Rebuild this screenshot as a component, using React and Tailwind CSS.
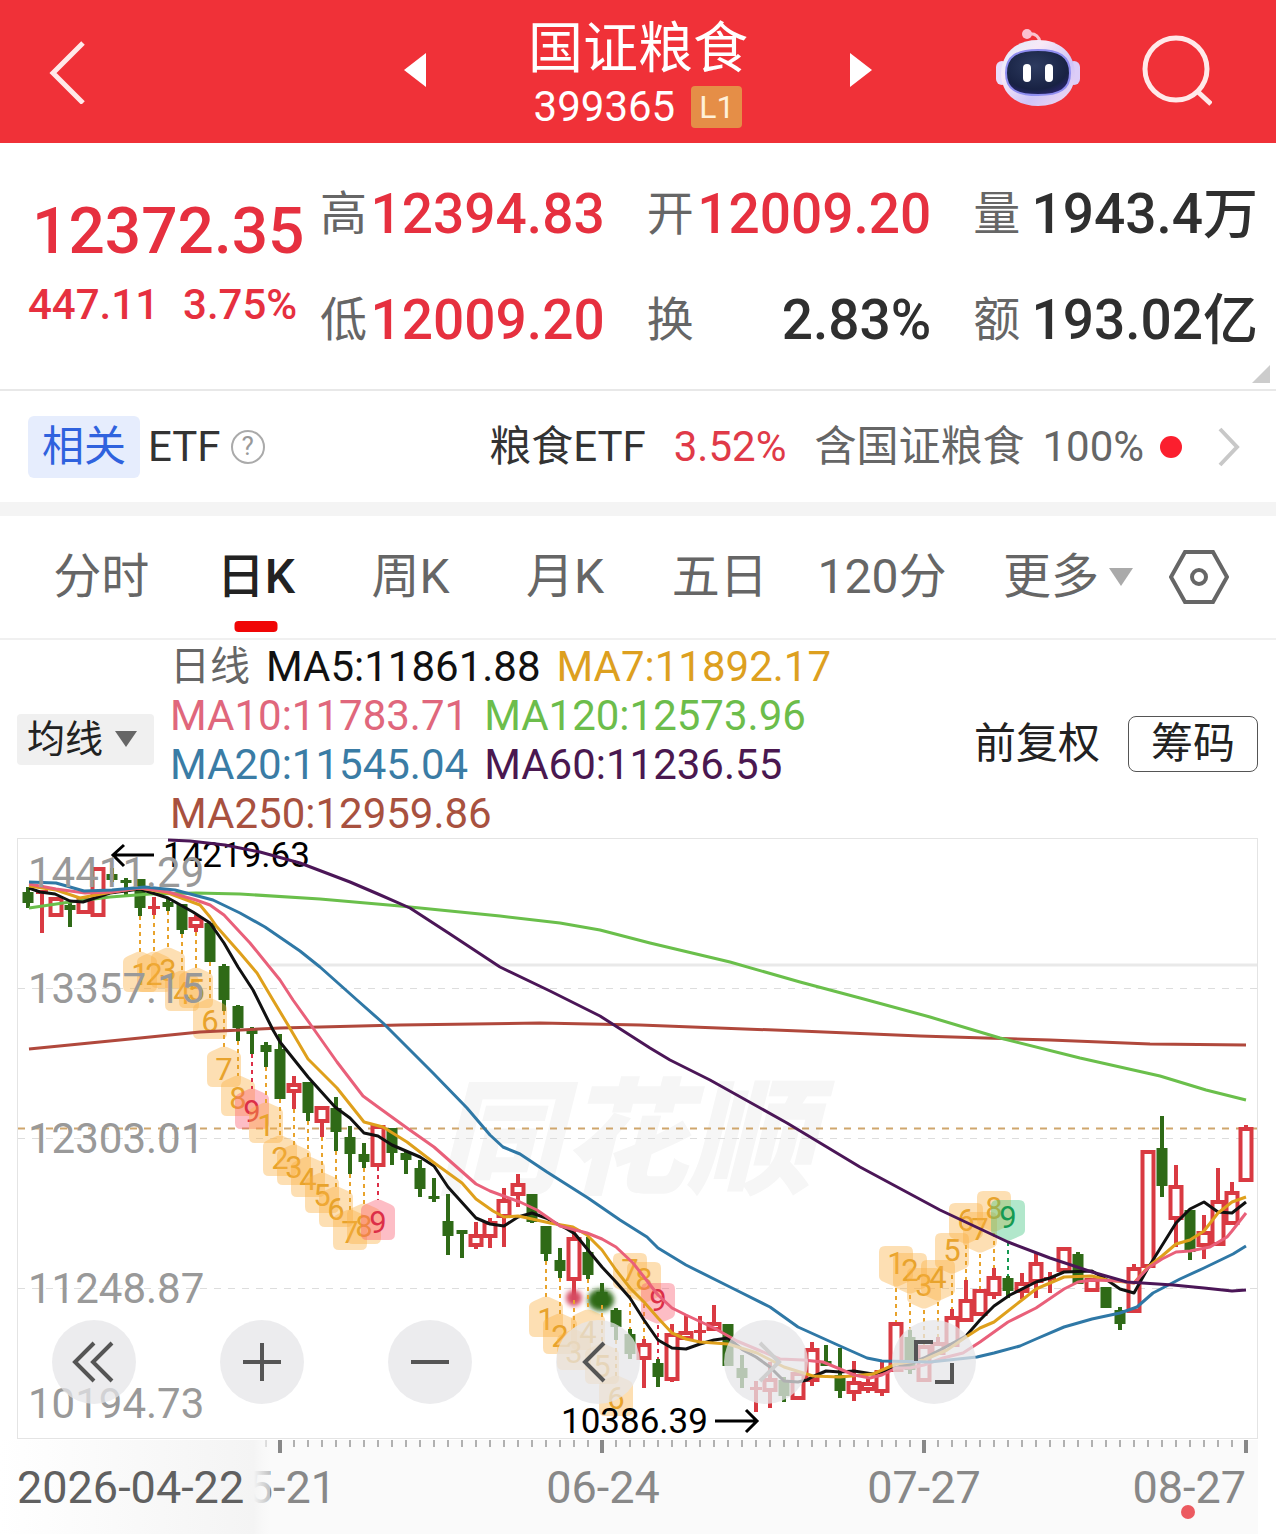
import React from 'react';

const RED = '#d93a42';
const GREEN = '#2f6a17';

const quotes = [
    { label: '高', value: '12394.83', color: 'text-[#e6303f]' },
    { label: '开', value: '12009.20', color: 'text-[#e6303f]' },
    { label: '量', value: '1943.4万', color: 'text-[#2f2f2f]' },
    { label: '低', value: '12009.20', color: 'text-[#e6303f]' },
    { label: '换', value: '2.83%', color: 'text-[#2f2f2f]' },
    { label: '额', value: '193.02亿', color: 'text-[#2f2f2f]' },
];

const tabs = ['分时', '日K', '周K', '月K', '五日', '120分'];

const averages = [
    { text: 'MA5:11861.88', color: 'text-[#111111]' },
    { text: 'MA7:11892.17', color: 'text-[#dda01f]' },
    { text: 'MA10:11783.71', color: 'text-[#e0677c]' },
    { text: 'MA120:12573.96', color: 'text-[#6cbd4b]' },
    { text: 'MA20:11545.04', color: 'text-[#3a7ca5]' },
    { text: 'MA60:11236.55', color: 'text-[#4a1850]' },
    { text: 'MA250:12959.86', color: 'text-[#a8513f]' },
];

// [direction, high, low, body top, body bottom], one per trading day
const candles = [
    ['g', 887, 908, 892, 903], ['r', 890, 933, 890, 894], ['r', 897, 917, 897, 917], ['g', 900, 927, 905, 910],
    ['r', 898, 914, 898, 914], ['r', 867, 917, 867, 917], ['g', 868, 882, 874, 880], ['g', 878, 896, 880, 883],
    ['g', 879, 916, 879, 908], ['r', 897, 915, 906, 909], ['g', 898, 911, 902, 907], ['g', 904, 934, 904, 930],
    ['r', 915, 932, 917, 928], ['g', 923, 962, 923, 962], ['g', 964, 1011, 966, 1000], ['g', 1005, 1041, 1006, 1028],
    ['g', 1027, 1054, 1030, 1034], ['g', 1042, 1067, 1045, 1052], ['g', 1034, 1099, 1049, 1099], ['r', 1076, 1109, 1083, 1093],
    ['g', 1082, 1121, 1082, 1113], ['r', 1106, 1137, 1106, 1123], ['g', 1097, 1151, 1108, 1132], ['g', 1126, 1174, 1137, 1154],
    ['g', 1143, 1168, 1154, 1162], ['r', 1125, 1167, 1125, 1167], ['g', 1128, 1165, 1128, 1153], ['g', 1152, 1174, 1153, 1160],
    ['g', 1160, 1197, 1168, 1189], ['g', 1178, 1202, 1196, 1199], ['g', 1194, 1255, 1221, 1236], ['g', 1230, 1258, 1230, 1234],
    ['r', 1222, 1249, 1234, 1247], ['r', 1218, 1248, 1221, 1238], ['r', 1188, 1247, 1199, 1218], ['r', 1174, 1207, 1183, 1196],
    ['g', 1194, 1223, 1194, 1222], ['g', 1226, 1261, 1226, 1254], ['g', 1248, 1278, 1260, 1271], ['r', 1227, 1300, 1237, 1281],
    ['g', 1237, 1279, 1252, 1275], ['g', 1283, 1305, 1292, 1305], ['g', 1308, 1340, 1310, 1327], ['g', 1329, 1359, 1334, 1354],
    ['r', 1339, 1388, 1343, 1360], ['g', 1359, 1387, 1363, 1377], ['r', 1324, 1382, 1333, 1381], ['r', 1315, 1340, 1331, 1340],
    ['r', 1316, 1344, 1330, 1333], ['r', 1305, 1331, 1322, 1331], ['g', 1324, 1366, 1324, 1366], ['g', 1355, 1388, 1368, 1378],
    ['r', 1381, 1412, 1387, 1390], ['r', 1362, 1408, 1378, 1392], ['g', 1377, 1402, 1380, 1396], ['r', 1372, 1400, 1372, 1400],
    ['r', 1342, 1386, 1348, 1382], ['g', 1345, 1366, 1361, 1366], ['g', 1348, 1398, 1375, 1391], ['r', 1361, 1401, 1381, 1394],
    ['r', 1378, 1393, 1382, 1391], ['r', 1362, 1396, 1370, 1393], ['r', 1322, 1372, 1322, 1372], ['g', 1330, 1374, 1337, 1370],
    ['r', 1345, 1382, 1345, 1382], ['r', 1337, 1355, 1342, 1355], ['r', 1309, 1347, 1316, 1347], ['r', 1280, 1322, 1299, 1322],
    ['r', 1289, 1316, 1289, 1316], ['r', 1268, 1299, 1276, 1296], ['g', 1276, 1298, 1278, 1291], ['r', 1273, 1299, 1282, 1293],
    ['r', 1253, 1298, 1262, 1283], ['r', 1272, 1293, 1277, 1280], ['r', 1247, 1272, 1247, 1272], ['g', 1252, 1284, 1254, 1284],
    ['r', 1278, 1292, 1278, 1292], ['g', 1287, 1308, 1287, 1308], ['g', 1307, 1330, 1310, 1324], ['r', 1264, 1313, 1267, 1313],
    ['r', 1150, 1268, 1150, 1268], ['g', 1116, 1197, 1148, 1186], ['r', 1165, 1247, 1185, 1220], ['g', 1210, 1260, 1210, 1252],
    ['r', 1215, 1259, 1231, 1247], ['r', 1168, 1246, 1200, 1246], ['r', 1182, 1225, 1191, 1225], ['r', 1125, 1182, 1127, 1182],
];

// [count, day index, top of the marker]; the tip points at the candle
const buySetups = [
    [1, 8, 952], [2, 9, 952], [3, 10, 948], [4, 11, 971], [5, 12, 968], [6, 13, 999], [7, 14, 1047], [8, 15, 1076], [9, 16, 1089],
    [1, 17, 1103], [2, 18, 1136], [3, 19, 1145], [4, 20, 1157], [5, 21, 1173], [6, 22, 1187], [7, 23, 1210], [8, 24, 1204], [9, 25, 1200],
    [1, 37, 1297], [2, 38, 1314], [3, 39, 1330], [4, 40, 1310], [5, 41, 1344], [6, 42, 1376],
];
const sellSetups = [
    [7, 43, 1253], [8, 44, 1262], [9, 45, 1283, 'red'],
    [1, 62, 1246], [2, 63, 1253], [3, 64, 1268], [4, 65, 1260], [5, 66, 1233], [6, 67, 1203], [7, 68, 1212], [8, 69, 1191], [9, 70, 1200, 'green'],
];

const markerColors = {
    orange: { fill: '#fbb040', text: '#e8a32c' },
    red: { fill: '#fb5a6e', text: '#dc2f48' },
    green: { fill: '#3cc47c', text: '#169a52' },
};

const lines = [
    { color: '#b0483c', points: '29,1049 120,1040 200,1032 280,1028 400,1025 540,1023 640,1025 800,1031 920,1036 1050,1040 1150,1044 1246,1045' },
    { color: '#6abf4b', points: '29,908 70,902 110,897 150,894 196,893 240,894 320,899 400,906 500,916 560,923 600,930 650,943 730,962 800,982 860,998 930,1017 1000,1038 1080,1058 1160,1076 1206,1090 1246,1100' },
    { color: '#111111', points: '29,888 40,892 55,894 70,901 83,902 110,893 140,889 168,898 193,912 210,923 224,943 238,967 253,990 273,1030 280,1042 308,1077 335,1107 350,1118 364,1133 378,1136 392,1145 420,1157 434,1166 448,1187 476,1218 490,1224 504,1226 518,1217 532,1213 546,1218 567,1229 575,1234 588,1250 602,1267 616,1282 630,1298 644,1320 658,1340 672,1348 686,1349 700,1344 714,1340 728,1338 743,1350 756,1357 770,1367 784,1381 798,1382 807,1380 812,1377 826,1371 840,1372 854,1371 873,1374 890,1369 910,1364 924,1358 940,1350 966,1336 980,1320 994,1306 1010,1295 1036,1282 1050,1278 1064,1272 1092,1271 1107,1280 1120,1289 1134,1293 1148,1268 1153,1260 1176,1223 1190,1209 1204,1202 1218,1212 1232,1213 1246,1202' },
    { color: '#dfa01c', points: '29,886 56,890 80,898 112,892 140,888 168,893 200,905 210,917 217,927 240,953 257,973 273,1000 288,1025 308,1059 337,1088 364,1122 383,1127 407,1142 433,1162 462,1183 476,1199 493,1211 504,1217 518,1216 532,1219 550,1223 573,1227 587,1235 602,1250 616,1270 630,1288 644,1302 658,1318 672,1333 686,1339 700,1342 728,1344 757,1353 784,1367 813,1376 840,1377 873,1374 896,1364 924,1360 947,1350 966,1337 980,1328 994,1322 1022,1300 1036,1289 1064,1277 1092,1276 1107,1280 1134,1283 1148,1267 1162,1256 1176,1244 1190,1240 1204,1231 1218,1213 1232,1202 1246,1197' },
    { color: '#e9607a', points: '29,884 56,889 85,893 112,892 140,888 168,892 196,900 210,905 224,915 250,943 280,980 293,1000 313,1028 337,1062 363,1096 378,1107 407,1128 434,1147 476,1184 490,1191 520,1202 537,1210 560,1226 587,1233 602,1239 616,1247 633,1263 644,1277 658,1295 672,1308 686,1315 714,1328 737,1341 756,1349 780,1359 803,1360 823,1362 840,1369 854,1375 870,1378 882,1375 896,1368 910,1368 924,1365 943,1358 963,1353 980,1342 1008,1322 1036,1308 1064,1289 1078,1282 1093,1280 1120,1281 1134,1283 1148,1268 1162,1259 1176,1252 1190,1251 1210,1247 1227,1237 1232,1231 1246,1213' },
    { color: '#2f78a6', points: '29,882 56,883 84,891 112,890 145,887 175,890 213,900 240,913 265,927 300,951 320,967 357,1000 383,1023 433,1073 467,1108 490,1135 503,1147 520,1154 547,1172 588,1198 620,1220 647,1237 658,1248 686,1265 728,1286 740,1292 770,1307 798,1327 840,1346 867,1358 882,1361 930,1362 977,1357 994,1353 1020,1346 1036,1339 1064,1327 1092,1319 1120,1313 1137,1307 1153,1293 1180,1279 1204,1268 1233,1254 1246,1246' },
    { color: '#4b1657', points: '168,840 190,841 225,845 260,852 300,863 350,882 378,894 410,908 450,934 500,967 550,991 600,1016 650,1048 670,1060 710,1080 787,1123 860,1167 940,1210 1008,1242 1050,1258 1092,1272 1127,1282 1173,1285 1204,1288 1232,1291 1246,1290' },
];

const priceLabels = [
    ['14411.29', 887], ['13357.15', 1003], ['12303.01', 1153], ['11248.87', 1303], ['10194.73', 1418],
];

const dayX = (i) => 28 + i * 14;

function Candle({ day, data }) {
    const [dir, high, low, top, bottom] = data;
    const x = dayX(day);
    if (dir === 'g') {
        return (
            <g fill={GREEN}>
                <rect x={x - 2} y={high} width="4" height={low - high} />
                <rect x={x - 5.5} y={top} width="11" height={bottom - top} />
            </g>
        );
    }
    const height = bottom - top;
    return (
        <g fill={RED}>
            {top > high && <rect x={x - 2} y={high} width="4" height={top - high} />}
            {low > bottom && <rect x={x - 2} y={bottom} width="4" height={low - bottom} />}
            {height > 8
                ? <rect x={x - 5.5} y={top + 2} width="11" height={height - 4} fill="#ffffff" stroke={RED} strokeWidth="4" />
                : <rect x={x - 6} y={top} width="12" height={height} />}
        </g>
    );
}

function Marker({ count, day, y, down, tone }) {
    const x = dayX(day);
    const { fill, text } = markerColors[tone];
    const [, high, low] = candles[day];
    const shape = down
        ? `M${x - 11} ${y}h22q6 0 6 6v24q0 4 -5 6l-9 4q-3 1 -6 0l-9 -4q-5 -2 -5 -6v-24q0 -6 6 -6z`
        : `M${x - 11} ${y + 40}h22q6 0 6 -6v-24q0 -4 -5 -6l-9 -4q-3 -1 -6 0l-9 4q-5 2 -5 6v24q0 6 6 6z`;
    return (
        <g>
            <line x1={x} x2={x} y1={down ? y + 42 : low} y2={down ? high : y} stroke={text} strokeWidth="2" strokeDasharray="4 4" />
            <path d={shape} fill={fill} fillOpacity="0.4" />
            <text x={x} y={down ? y + 28 : y + 33} textAnchor="middle" fontSize="31" fill={text}>{count}</text>
        </g>
    );
}

function KLineChart() {
    return (
        <svg viewBox="0 838 1276 696" className="block w-full overflow-visible" role="img" aria-label="日K线图">
            <defs>
                <linearGradient id="dateFade" x1="0" x2="1" y1="0" y2="0">
                    <stop offset="0" stopColor="#ffffff" />
                    <stop offset="0.94" stopColor="#f4f4f4" />
                    <stop offset="1" stopColor="#fafafa" stopOpacity="0.5" />
                </linearGradient>
                <filter id="soft" x="-50%" y="-50%" width="200%" height="200%">
                    <feGaussianBlur stdDeviation="2.5" />
                </filter>
            </defs>

            <rect x="18" y="1440" width="1240" height="94" fill="#fafafa" />
            <rect x="17.5" y="838.5" width="1240" height="600" fill="#ffffff" stroke="#e4e4e4" />
            <text x="624" y="1184" textAnchor="middle" fontSize="126" fontWeight="900" fontStyle="italic" fill="#f6f6f6">同花顺</text>
            <line x1="270" x2="1257" y1="965" y2="965" stroke="#e9e9e9" strokeWidth="3" />
            {[988, 1138, 1288].map((y) => (
                <line key={y} x1="18" x2="1257" y1={y + 0.5} y2={y + 0.5} stroke="#dddddd" strokeDasharray="7 7" />
            ))}
            <line x1="18" x2="1257" y1="1128.5" y2="1128.5" stroke="#cfa66c" strokeWidth="2" strokeDasharray="7 7" />

            {candles.map((c, i) => <Candle key={i} day={i} data={c} />)}
            <ellipse cx="574" cy="1298" rx="8" ry="8" fill="#d64a60" filter="url(#soft)" />
            <ellipse cx="601" cy="1300" rx="13" ry="11" fill={GREEN} filter="url(#soft)" />

            {buySetups.map(([count, day, y]) => (
                <Marker key={day} count={count} day={day} y={y} tone={count === 9 ? 'red' : 'orange'} />
            ))}
            {sellSetups.map(([count, day, y, tone = 'orange']) => (
                <Marker key={day} count={count} day={day} y={y} tone={tone} down />
            ))}

            <text x="163" y="867" fontSize="35" fill="#000000">14219.63</text>
            <path d="M154 855H113M124 845L113 855L124 866" fill="none" stroke="#000000" strokeWidth="3" />
            <text x="561" y="1433" fontSize="35" fill="#000000">10386.39</text>
            <path d="M715 1421H757M746 1410L757 1421L746 1432" fill="none" stroke="#000000" strokeWidth="3" />

            {lines.map(({ color, points }) => (
                <polyline key={color} points={points} fill="none" stroke={color} strokeWidth="3" strokeLinejoin="round" />
            ))}

            {priceLabels.map(([text, y]) => (
                <text key={text} x="28" y={y} fontSize="42" fill="#999999">{text}</text>
            ))}

            {candles.map((_, i) => {
                if (i < 17) return null;
                const major = (i - 18) % 23 === 0;
                return (
                    <rect
                        key={i}
                        x={dayX(i) - (major ? 2 : 1)}
                        y="1440"
                        width={major ? 4 : 2}
                        height={major ? 13 : 7}
                        fill={major ? '#888888' : '#b0b0b0'}
                    />
                );
            })}
            <g fontSize="45" fill="#888888">
                <text x="336" y="1503" textAnchor="end">05-21</text>
                <text x="603" y="1503" textAnchor="middle">06-24</text>
                <text x="924" y="1503" textAnchor="middle">07-27</text>
                <text x="1246" y="1503" textAnchor="end">08-27</text>
            </g>
            <rect x="0" y="1440" width="270" height="94" fill="url(#dateFade)" />
            <text x="17" y="1503" fontSize="45" fill="#606060">2026-04-22</text>
            <circle cx="1188" cy="1512" r="7" fill="#ec5a60" />
        </svg>
    );
}

function RoundButton({ label, faint, children }) {
    return (
        <button type="button" aria-label={label} className="size-[84px] rounded-full bg-[#e6e6e8]/75">
            <svg viewBox="0 0 84 84" fill="none" stroke={faint ? '#cfcfcf' : '#555555'} strokeWidth="4" className="size-full">
                {children}
            </svg>
        </button>
    );
}

function RobotIcon() {
    return (
        <svg viewBox="0 0 84 78" className="h-[78px] w-[84px]">
            <defs>
                <linearGradient id="shell" x1="0" x2="1" y1="0" y2="1">
                    <stop offset="0" stopColor="#d9ecff" />
                    <stop offset="0.3" stopColor="#f8e9f6" />
                    <stop offset="0.65" stopColor="#cfc4f8" />
                    <stop offset="1" stopColor="#f6dcf0" />
                </linearGradient>
                <radialGradient id="visor" cx="0.45" cy="0.35" r="0.7">
                    <stop offset="0" stopColor="#2d3b60" />
                    <stop offset="0.75" stopColor="#182243" />
                    <stop offset="1" stopColor="#2b2470" />
                </radialGradient>
            </defs>
            <path d="M31 5q11 -2 13 8" fill="none" stroke="#f9c3cf" strokeWidth="3" />
            <circle cx="31" cy="5" r="5" fill="#fbc0d0" />
            <rect x="0" y="32" width="12" height="24" rx="6" fill="#e9dcfb" />
            <rect x="72" y="32" width="12" height="24" rx="6" fill="#dccdf8" />
            <path d="M42 11C64 11 78 24 79 44C79 66 62 77 42 77C22 77 5 66 5 44C6 24 20 11 42 11Z" fill="url(#shell)" />
            <path d="M42 21C63 21 74 27 74 44C74 60 64 66 42 66C20 66 10 60 10 44C10 27 21 21 42 21Z" fill="url(#visor)" stroke="#8f8df0" strokeWidth="2" />
            <rect x="27" y="35" width="8" height="18" rx="4" fill="#ffffff" />
            <rect x="49" y="35" width="8" height="18" rx="4" fill="#ffffff" />
        </svg>
    );
}

function Header() {
    return (
        <header className="grid h-[143px] grid-cols-[1fr_auto_1fr] items-center bg-[#f03138] text-white">
            <button type="button" aria-label="返回" className="ml-12 justify-self-start">
                <svg viewBox="0 0 40 64" fill="none" stroke="#ffe9e9" strokeWidth="5" className="h-16 w-10">
                    <path d="M35 3L5 33L35 63" />
                </svg>
            </button>
            <div className="flex w-[469px] items-center justify-between">
                <button type="button" aria-label="上一个" className="pb-1">
                    <svg viewBox="0 0 22 34" className="h-[34px] w-[22px]"><path d="M22 0V34L0 17Z" fill="#ffffff" /></svg>
                </button>
                <div className="flex flex-col items-center pt-1">
                    <h1 className="text-[55px] leading-[66px]">国证粮食</h1>
                    <div className="flex items-center gap-4">
                        <span className="text-[42px] leading-[52px]">399365</span>
                        <span className="rounded-sm bg-[#e58e47] px-2 text-[32px] leading-[42px] text-[#fff0d8]">L1</span>
                    </div>
                </div>
                <button type="button" aria-label="下一个" className="pb-1">
                    <svg viewBox="0 0 22 34" className="h-[34px] w-[22px]"><path d="M0 0V34L22 17Z" fill="#ffffff" /></svg>
                </button>
            </div>
            <div className="mr-16 flex items-center gap-[60px] justify-self-end">
                <button type="button" aria-label="智能助手" className="pb-2">
                    <RobotIcon />
                </button>
                <button type="button" aria-label="搜索" className="pb-1">
                    <svg viewBox="0 0 72 72" fill="none" stroke="#ffe9e9" strokeWidth="5" className="size-[72px]">
                        <circle cx="36" cy="35" r="31" />
                        <path d="M57 57L71 70" />
                    </svg>
                </button>
            </div>
        </header>
    );
}

function QuotePanel() {
    return (
        <section className="relative flex h-[248px] border-b-2 border-[#e8e8e8] pr-[18px]">
            <div className="w-[320px] shrink-0 pl-7 pt-14 font-medium text-[#e6303f]">
                <div className="pl-1 text-[64px] leading-[66px]">12372.35</div>
                <div className="mt-[18px] flex gap-6 text-[42px] leading-[44px]">
                    <span>447.11</span>
                    <span>3.75%</span>
                </div>
            </div>
            <dl className="grid flex-1 grid-cols-3 content-start gap-x-[42px] pt-[18px]">
                {quotes.map((q) => (
                    <div key={q.label} className="flex h-[106px] items-center justify-between whitespace-nowrap">
                        <dt className="text-[47px] text-[#666666]">{q.label}</dt>
                        <dd className={`text-[55px] font-medium ${q.color}`}>{q.value}</dd>
                    </div>
                ))}
            </dl>
            <svg viewBox="0 0 18 18" className="absolute bottom-1.5 right-1.5 size-[18px]"><path d="M18 0V18H0Z" fill="#cccccc" /></svg>
        </section>
    );
}

function RelatedRow() {
    return (
        <section className="flex h-[125px] items-center whitespace-nowrap border-b-[14px] border-[#f4f4f4] pl-7 pr-9 text-[42px] text-[#333333]">
            <span className="rounded-md bg-[#e6edfd] px-3.5 leading-[62px] text-[#2f62de]">相关</span>
            <span className="ml-2">ETF</span>
            <button type="button" aria-label="说明" className="ml-2.5 flex size-[34px] items-center justify-center rounded-full border-2 border-[#aaaaaa] text-[26px] text-[#999999]">
                ?
            </button>
            <a href="#etf" className="ml-auto flex items-center">
                <span>粮食ETF</span>
                <span className="ml-7 text-[#e03a48]">3.52%</span>
                <span className="ml-7 text-[#666666]">含国证粮食</span>
                <span className="ml-[18px] text-[#666666]">100%</span>
                <span className="ml-4 size-[22px] rounded-full bg-[#fb1f2e]" />
                <svg viewBox="0 0 22 40" fill="none" stroke="#c8c8c8" strokeWidth="4" className="ml-9 h-10 w-[22px]">
                    <path d="M2 2L19 20L2 38" />
                </svg>
            </a>
        </section>
    );
}

function PeriodTabs() {
    return (
        <nav className="flex h-[124px] items-center whitespace-nowrap border-b-2 border-[#f0f0f0] pl-6 pr-[47px] text-[48px] text-[#666666]">
            {tabs.map((tab) => {
                const active = tab === '日K';
                return (
                    <button
                        key={tab}
                        type="button"
                        className={`relative h-full basis-0 ${tab.length > 2 ? 'grow-[11]' : 'grow-[10]'} ${active ? 'font-medium text-[#222222]' : ''}`}
                    >
                        {tab}
                        {active && <span className="absolute bottom-1.5 left-1/2 h-[11px] w-[43px] -translate-x-1/2 rounded bg-[#f00505]" />}
                    </button>
                );
            })}
            <button type="button" className="ml-9 flex h-full items-center gap-2.5">
                更多
                <svg viewBox="0 0 24 18" className="h-[18px] w-6"><path d="M0 0H24L12 18Z" fill="#aaaaaa" /></svg>
            </button>
            <button type="button" aria-label="设置" className="ml-9">
                <svg viewBox="0 0 60 54" fill="none" stroke="#666666" strokeWidth="4" className="h-[54px] w-[60px]">
                    <path d="M16 2H44L58 27L44 52H16L2 27Z" />
                    <circle cx="30" cy="27" r="7" />
                </svg>
            </button>
        </nav>
    );
}

function AverageLegend() {
    return (
        <section className="flex h-[198px] items-center whitespace-nowrap pl-[17px] pr-[18px]">
            <button type="button" className="flex h-[51px] w-[137px] items-center gap-3 rounded bg-[#f0f0f0] pl-2.5 text-[38px] text-[#222222]">
                均线
                <svg viewBox="0 0 22 16" className="h-4 w-[22px]"><path d="M0 0H22L11 16Z" fill="#666666" /></svg>
            </button>
            <div className="ml-4 flex flex-1 flex-wrap gap-x-4 pt-0.5 text-[42px] leading-[49px]">
                <span className="text-[40px] text-[#666666]">日线</span>
                {averages.map((a) => (
                    <span key={a.text} className={a.color}>{a.text}</span>
                ))}
            </div>
            <div className="flex items-center gap-7 pt-2.5 text-[42px] leading-[54px] text-[#222222]">
                <button type="button">前复权</button>
                <button type="button" className="rounded-lg border border-[#555555] px-[22px]">筹码</button>
            </div>
        </section>
    );
}

export default function App() {
    return (
        <main className="bg-white font-['Roboto','Noto_Sans_CJK_SC',sans-serif]">
            <Header />
            <QuotePanel />
            <RelatedRow />
            <PeriodTabs />
            <AverageLegend />
            <div className="relative">
                <KLineChart />
                {/* chart controls float over the lower part of the plot */}
                <div className="absolute bottom-[130px] left-[52px] flex gap-[84px]">
                    <RoundButton label="最左"><path d="M42 23L23 42L42 61M60 23L41 42L60 61" /></RoundButton>
                    <RoundButton label="放大"><path d="M42 23V61M23 42H61" /></RoundButton>
                    <RoundButton label="缩小"><path d="M23 42H61" /></RoundButton>
                    <RoundButton label="左移"><path d="M48 23L29 42L48 61" /></RoundButton>
                    <RoundButton label="右移" faint><path d="M36 23L55 42L36 61" /></RoundButton>
                    <RoundButton label="全屏"><path d="M41 22H24V41M60 43V62H43" /></RoundButton>
                </div>
            </div>
        </main>
    );
}
